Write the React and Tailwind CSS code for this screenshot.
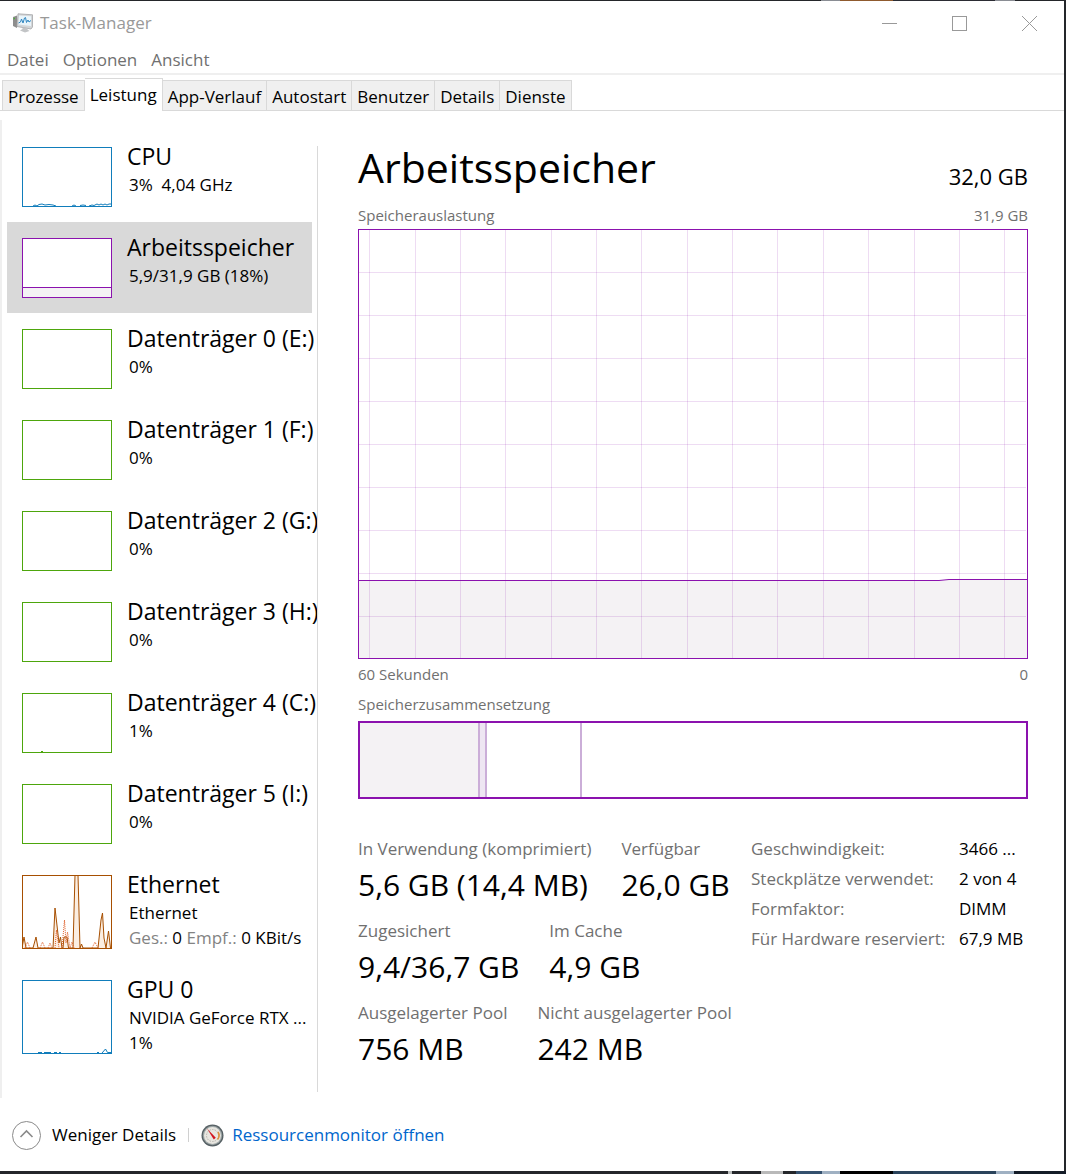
import React, { useState } from "react";
import clsx from "clsx";

const MENUS = ["Datei", "Optionen", "Ansicht"];

const TABS = [
  "Prozesse",
  "Leistung",
  "App-Verlauf",
  "Autostart",
  "Benutzer",
  "Details",
  "Dienste",
];

const DEVICES = [
  { id: "cpu", name: "CPU", lines: ["3%\u00a0 4,04 GHz"], graph: "cpu" },
  { id: "mem", name: "Arbeitsspeicher", lines: ["5,9/31,9 GB (18%)"], graph: "memory" },
  { id: "disk0", name: "Datenträger 0 (E:)", lines: ["0%"], graph: "disk" },
  { id: "disk1", name: "Datenträger 1 (F:)", lines: ["0%"], graph: "disk" },
  { id: "disk2", name: "Datenträger 2 (G:)", lines: ["0%"], graph: "disk" },
  { id: "disk3", name: "Datenträger 3 (H:)", lines: ["0%"], graph: "disk" },
  { id: "disk4", name: "Datenträger 4 (C:)", lines: ["1%"], graph: "diskBusy" },
  { id: "disk5", name: "Datenträger 5 (I:)", lines: ["0%"], graph: "disk" },
  {
    id: "eth",
    name: "Ethernet",
    lines: [
      "Ethernet",
      <>
        <span className="text-[#838383]">Ges.:</span> 0{" "}
        <span className="text-[#838383]">Empf.:</span> 0 KBit/s
      </>,
    ],
    graph: "ethernet",
  },
  { id: "gpu", name: "GPU 0", lines: ["NVIDIA GeForce RTX ...", "1%"], graph: "gpu" },
];

const STATS = [
  [
    ["In Verwendung (komprimiert)", "5,6 GB (14,4 MB)"],
    ["Verfügbar", "26,0 GB"],
  ],
  [
    ["Zugesichert", "9,4/36,7 GB"],
    ["Im Cache", "4,9 GB"],
  ],
  [
    ["Ausgelagerter Pool", "756 MB"],
    ["Nicht ausgelagerter Pool", "242 MB"],
  ],
];

const HARDWARE = [
  ["Geschwindigkeit:", "3466 ..."],
  ["Steckplätze verwendet:", "2 von 4"],
  ["Formfaktor:", "DIMM"],
  ["Für Hardware reserviert:", "67,9 MB"],
];

const AppIcon = () => (
  <svg width="22" height="20" viewBox="0 0 22 20" aria-hidden="true">
    <path d="M1 4 L5 2.5 V15 L1 13Z" fill="#8d8d8d" />
    <path d="M1.5 5 L3 4.5 V6 L1.500 6.500Z" fill="#4fae3c" />
    <path d="M6 0.800 L20.500 1.800 V14 L19 16 L5 13.500Z" fill="#d4d6d8" stroke="#a4a6a8" strokeWidth="0.8" />
    <path d="M7 2.500 L19 3.300 V13 L6.500 11.500Z" fill="#e9f5fb" />
    <path
      d="M6.500 10 L8.500 9 L9.500 6 L11 10 L12.500 5 L13.500 4.500 L14.500 9.500 L16 7 L17 9 L19 7.500"
      fill="none"
      stroke="#2f86c1"
      strokeWidth="1"
    />
    <path d="M10.500 14.500 L15.500 15.500 V16.500 L17.500 18 L13 19.500 L8 17.500 L10.500 16Z" fill="#c2c4c6" />
  </svg>
);

const GaugeIcon = () => (
  <svg width="23" height="23" viewBox="0 0 23 23" aria-hidden="true">
    <circle cx="11.500" cy="11.500" r="11" fill="#566064" />
    <circle cx="11.500" cy="11.500" r="9.700" fill="#9aa3a4" />
    <circle cx="11.500" cy="11.500" r="8.500" fill="#e8e6e0" />
    <circle cx="11.500" cy="11.500" r="6" fill="none" stroke="#b5b3ad" strokeWidth="1" strokeDasharray="1.500 1.200" />
    <path d="M17 8 A6.500 6.500 0 0 1 16.500 15.500" fill="none" stroke="#dc9141" strokeWidth="1.600" />
    <path d="M6 4.500 L14.800 13.800 L12.800 15.400 Z" fill="#d3161f" />
  </svg>
);

const Spark = ({ type }) => {
  if (type === "cpu") {
    return (
      <svg className="block h-[60px] w-[90px] bg-white" viewBox="0 0 90 60" aria-hidden="true">
        <path
          d="M11 59 L13 58 L15 59 L17 57.500 L20 57 L23 58 L27 57.500 L31 58 L34 59 M50 59 L52 58 L54 59 M58 58.500 L61 58 L64 58.500 M67 59 L70 58 L72 58.500 L75 57 L77 58 L79 57 L81 58 L83 57 L85 58 L87 57 L89 57"
          fill="none"
          stroke="#117dbb"
        />
        <rect x="0.500" y="0.500" width="89" height="59" fill="none" stroke="#117dbb" />
      </svg>
    );
  }
  if (type === "memory") {
    return (
      <svg className="block h-[60px] w-[90px] bg-white" viewBox="0 0 90 60" aria-hidden="true">
        <path d="M0 49.500 H90 V60 H0Z" fill="#f4f2f4" />
        <path d="M0 49.500 H90" stroke="#8b12ae" />
        <rect x="0.500" y="0.500" width="89" height="59" fill="none" stroke="#8b12ae" />
      </svg>
    );
  }
  if (type === "ethernet") {
    return (
      <svg className="block h-[74px] w-[90px] bg-white" viewBox="0 0 90 74" aria-hidden="true">
        <path
          d="M0 73 L2 62 L4 73 H11 L14 62 L16 73 H31 L33 33 L37 68 L38.500 62 L40 73 H41 L42 62 H45 L46.500 73 H51 L53 0 H56 L58 73 L59.500 69 L61 73 H76 L79 45 L80.500 38 L82 63 L84 73 L86.500 56 L88.500 73"
          fill="#fbeee2"
          stroke="#a74f01"
        />
        <path
          d="M3 73 L5.500 67 L8 73 M18 73 L20.500 67 L23 73 M26 73 L28 68 L30 73 M33 73 L34.500 55 L37 73 M40 73 L42.500 45 L44 68 L45.500 57 L48 73 L50 67 L52 73 M70 73 L73 67 L76 73"
          fill="none"
          stroke="#e0602a"
          strokeDasharray="1 1"
        />
        <rect x="0.500" y="0.500" width="89" height="73" fill="none" stroke="#a74f01" />
      </svg>
    );
  }
  if (type === "gpu") {
    return (
      <svg className="block h-[74px] w-[90px] bg-white" viewBox="0 0 90 74" aria-hidden="true">
        <path
          d="M16 72.500 H20 M22 72.500 H29 M32 72.500 H35 M37 72.500 H39 M75 72.500 H77 M80 73 L83.500 69 L85.500 72.500 H89"
          fill="none"
          stroke="#117dbb"
        />
        <rect x="0.500" y="0.500" width="89" height="73" fill="none" stroke="#117dbb" />
      </svg>
    );
  }
  return (
    <svg className="block h-[60px] w-[90px] bg-white" viewBox="0 0 90 60" aria-hidden="true">
      {type === "diskBusy" && <path d="M19 58.500 H21" stroke="#4da60c" />}
      <rect x="0.500" y="0.500" width="89" height="59" fill="none" stroke="#4da60c" />
    </svg>
  );
};

const TitleBar = () => (
  <header className="flex h-[44px] items-center justify-between pl-3">
    <div className="flex items-center gap-[6px]">
      <AppIcon />
      <h1 className="text-[17px] leading-6 text-[#999999]">Task-Manager</h1>
    </div>
    <div className="flex text-[#999999]">
      <button type="button" aria-label="Minimieren" className="flex h-[44px] w-[70px] items-center justify-center">
        <svg width="15" height="15" viewBox="0 0 15 15" stroke="currentColor">
          <path d="M0 7.500 H15" />
        </svg>
      </button>
      <button type="button" aria-label="Maximieren" className="flex h-[44px] w-[70px] items-center justify-center">
        <svg width="15" height="15" viewBox="0 0 15 15" fill="none" stroke="currentColor">
          <rect x="0.500" y="0.500" width="14" height="14" />
        </svg>
      </button>
      <button type="button" aria-label="Schließen" className="flex h-[44px] w-[70px] items-center justify-center">
        <svg width="15" height="15" viewBox="0 0 15 15" stroke="currentColor">
          <path d="M0 0 L15 15 M15 0 L0 15" />
        </svg>
      </button>
    </div>
  </header>
);

const DeviceItem = ({ device, selected, onSelect }) => (
  <button
    type="button"
    onClick={() => onSelect(device.id)}
    className={clsx(
      "flex w-[305px] gap-[15px] pt-[15px] pl-[15px] text-left whitespace-nowrap",
      device.lines.length > 1 ? "h-[105px]" : "h-[91px]",
      selected && "bg-[#d9d9d9]"
    )}
  >
    <span className="mt-px shrink-0">
      <Spark type={device.graph} />
    </span>
    <span className="block">
      <span className="block text-[23px] leading-5">{device.name}</span>
      <span className="block pt-[6px] pl-[2px] text-[17px] leading-[25px]">
        {device.lines.map((line, i) => (
          <span key={i} className="block">
            {line}
          </span>
        ))}
      </span>
    </span>
  </button>
);

const GRID_X = [11, 57, 102, 147, 193, 238, 283, 329, 374, 419, 465, 510, 556, 601, 646];
const GRID_Y = [43, 86, 129, 172, 215, 258, 301, 344, 387];

const UsageChart = () => (
  <svg
    className="block h-[430px] w-full border border-[#8b12ae]"
    viewBox="1 1 668 428"
    preserveAspectRatio="none"
    role="img"
    aria-label="Speicherauslastung"
  >
    <path d="M0 351.500 H581 L591 350.500 H670 V430 H0Z" fill="#f4f2f4" />
    <g stroke="#8b12ae" strokeOpacity="0.15">
      {GRID_X.map((x) => (
        <path key={x} d={`M${x + 0.5} 0 V430`} />
      ))}
      {GRID_Y.map((y) => (
        <path key={y} d={`M0 ${y + 0.5} H668`} />
      ))}
    </g>
    <path d="M0 351.500 H581 L591 350.500 H670" fill="none" stroke="#8b12ae" />
  </svg>
);

const CompositionBar = () => (
  <div className="flex h-[78px] border-2 border-[#8b12ae]">
    <div className="w-[18%] border-r-2 border-[#cbaed8] bg-[#f4f2f4]" />
    <div className="w-[7px] border-r-2 border-[#cbaed8] bg-[#eee6f2]" />
    <div className="w-[95px] border-r-2 border-[#cbaed8]" />
  </div>
);

const MemoryPanel = () => (
  <section className="min-w-0 flex-1 pr-9 pl-10">
    <div className="flex items-end justify-between">
      <h2 className="text-[41px] leading-[42px]">Arbeitsspeicher</h2>
      <span className="text-[22px] leading-6">32,0 GB</span>
    </div>
    <div className="mt-[17px] flex justify-between text-[15px] leading-5 text-[#707070]">
      <span>Speicherauslastung</span>
      <span>31,9 GB</span>
    </div>
    <div className="mt-1">
      <UsageChart />
    </div>
    <div className="mt-[5px] flex justify-between text-[15px] leading-5 text-[#707070]">
      <span>60 Sekunden</span>
      <span>0</span>
    </div>
    <div className="mt-[10px] mb-[7px] text-[15px] leading-5 text-[#707070]">
      Speicherzusammensetzung
    </div>
    <CompositionBar />

    <div className="mt-[35px] flex items-start whitespace-nowrap">
      <div className="w-[393px] shrink-0">
        {STATS.map((row) => (
          <dl key={row[0][0]} className="flex h-[82px] gap-[30px]">
            {row.map(([label, value]) => (
              <div key={label}>
                <dt className="text-[17px] leading-[30px] text-[#707070]">{label}</dt>
                <dd className="text-[30px] leading-[42px]">{value}</dd>
              </div>
            ))}
          </dl>
        ))}
      </div>
      <table className="text-left text-[17px] leading-[30px]">
        <tbody>
          {HARDWARE.map(([label, value]) => (
            <tr key={label}>
              <th scope="row" className="w-[208px] p-0 font-normal text-[#707070]">
                {label}
              </th>
              <td className="p-0">{value}</td>
            </tr>
          ))}
        </tbody>
      </table>
    </div>
  </section>
);

// the desktop shows through in thin strips around the window
const DesktopTop = () => (
  <div className="flex h-px justify-end pr-[51px]">
    <div className="w-[19px] bg-[#8a8d94]" />
    <div className="w-[53px] bg-[#8f5a2e]" />
    <div className="w-[102px] bg-[#2b2c33]" />
    <div className="w-[20px] bg-[#8a8d94]" />
  </div>
);

const DesktopBottom = () => (
  <div className="flex h-[3px] justify-end">
    <div className="w-[4px] bg-[#b9bcbc]" />
    <div className="w-[29px]" />
    <div className="w-[22px] bg-[#b9b9b9]" />
    <div className="w-[13px]" />
    <div className="w-[26px] bg-[#34506e]" />
    <div className="w-[18px] bg-[#9fb0c2]" />
    <div className="w-[53px] bg-black" />
    <div className="w-[103px] bg-[#2a435b]" />
    <div className="w-[18px] bg-[#9fb0c2]" />
    <div className="w-[52px] bg-[#141c28]" />
  </div>
);

export default function App() {
  const [tab, setTab] = useState("Leistung");
  const [device, setDevice] = useState("mem");

  return (
    <div className="flex min-h-screen flex-col bg-[#24262a] font-['Open_Sans','Noto_Sans',sans-serif] text-black">
      <DesktopTop />
      <div className="mr-[2px] flex flex-1 flex-col bg-white">
        <TitleBar />

        <nav className="flex h-[30px] gap-[14px] border-b-2 border-[#efefef] pl-[7px] text-[17px] leading-[30px] text-[#707070]">
          {MENUS.map((m) => (
            <button key={m} type="button">
              {m}
            </button>
          ))}
        </nav>

        <div role="tablist" className="flex h-[36px] items-end border-b border-[#d9d9d9] pl-[2px] text-[17px]">
          {TABS.map((t) => (
            <button
              key={t}
              type="button"
              role="tab"
              aria-selected={tab === t}
              onClick={() => setTab(t)}
              className={clsx(
                "border-t border-r border-[#d9d9d9] px-[5px] first:border-l",
                tab === t ? "-mb-px h-[33px] bg-white pb-px" : "h-[30px] bg-[#f0f0f0] pt-[2px]"
              )}
            >
              {t}
            </button>
          ))}
        </div>

        <main className="mt-[9px] flex border-l-2 border-[#efefef] pt-[11px] pb-[6px]">
          <aside className="w-[315px] shrink-0 pl-[5px]">
            {DEVICES.map((d) => (
              <DeviceItem key={d.id} device={d} selected={device === d.id} onSelect={setDevice} />
            ))}
          </aside>
          <div className="mt-[15px] flex min-h-[946px] min-w-0 flex-1 border-l border-[#d9d9d9]">
            <MemoryPanel />
          </div>
        </main>

        <footer className="mt-[20px] flex h-[34px] items-center pl-3 text-[17px]">
          <button type="button" className="flex items-center gap-[11px]">
            <svg width="29" height="29" viewBox="0 0 29 29" fill="none" aria-hidden="true">
              <circle cx="14.500" cy="14.500" r="14" stroke="#8a8a8a" />
              <path d="M8.500 16 L14.500 10 L20.500 16" stroke="#8a8a8a" strokeWidth="1.600" />
            </svg>
            Weniger Details
          </button>
          <span className="mx-3 h-[14px] w-px bg-[#d0d0d0]" />
          <a href="#ressourcenmonitor" className="flex items-center gap-2 text-[#0066cc]">
            <GaugeIcon />
            Ressourcenmonitor öffnen
          </a>
        </footer>
      </div>
      <DesktopBottom />
    </div>
  );
}
